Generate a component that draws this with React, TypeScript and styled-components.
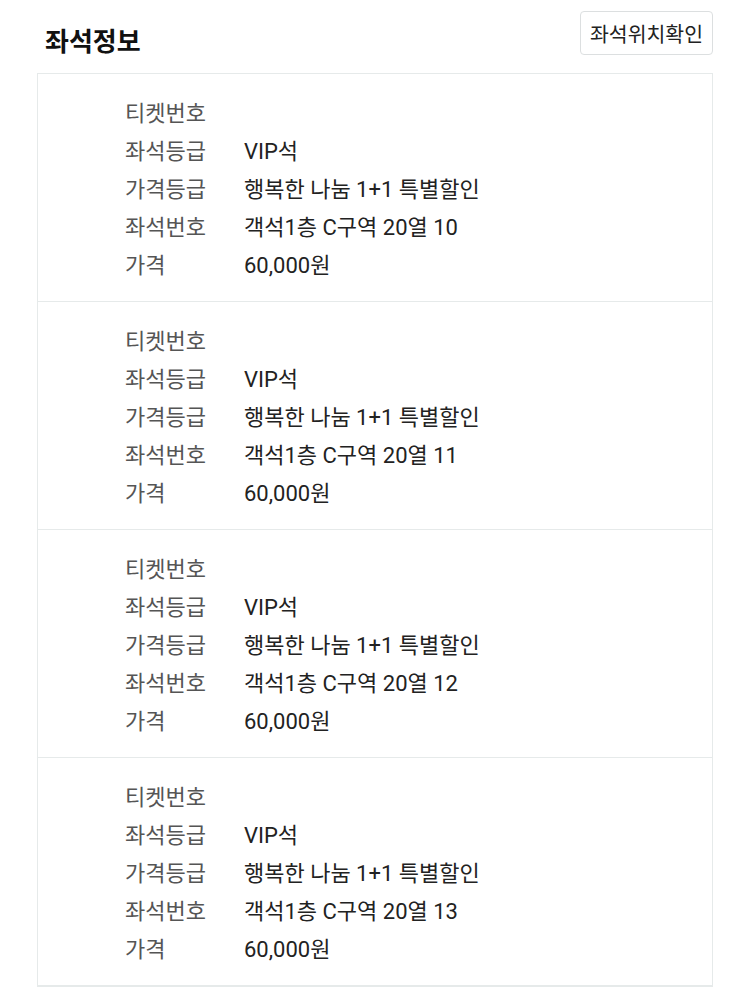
import React from "react";
import styled, { createGlobalStyle } from "styled-components";

const GlobalStyle = createGlobalStyle`
  html, body { margin: 0; padding: 0; background: #ffffff; }
  body { font-family: Roboto, "Noto Sans CJK KR", "Noto Sans", sans-serif; }
`;

const Page = styled.div`
  padding: 0 37px 0 37px;
  width: 750px;
  box-sizing: border-box;
`;

const Header = styled.div`
  display: flex;
  justify-content: space-between;
  align-items: flex-start;
  height: 73px;
`;

const Title = styled.h2`
  margin: 25px 0 0 8px;
  font-size: 26px;
  line-height: 30px;
  font-weight: 700;
  color: #111;
  font-family: "Noto Sans CJK KR", sans-serif;
`;

const OutlineButton = styled.button`
  margin-top: 11px;
  width: 133px;
  height: 44px;
  background: #fff;
  border: 1px solid #dcdfe0;
  border-radius: 4px;
  font-family: Roboto, "Noto Sans CJK KR", sans-serif;
  font-size: 20.5px;
  color: #222;
  padding: 0;
  display: flex;
  align-items: center;
  justify-content: center;
`;

const Card = styled.div`
  border: 1px solid #e6eaea;
  border-bottom-width: 2px;
`;

const Section = styled.div`
  padding: 18px 0 19px 87px;
  & + & {
    border-top: 1px solid #e6eaea;
  }
`;

const Row = styled.div`
  display: grid;
  grid-template-columns: 119px 1fr;
  height: 38px;
  align-items: center;
  font-size: 22px;
  white-space: nowrap;
`;

const Label = styled.span`
  color: #555;
`;

const Value = styled.span`
  color: #222;
`;

const tickets = ["10", "11", "12", "13"];

export default function App() {
  return (
    <>
      <GlobalStyle />
      <Page>
        <Header>
          <Title>좌석정보</Title>
          <OutlineButton>좌석위치확인</OutlineButton>
        </Header>
        <Card>
          {tickets.map((seat) => (
            <Section key={seat}>
              <Row>
                <Label>티켓번호</Label>
                <Value></Value>
              </Row>
              <Row>
                <Label>좌석등급</Label>
                <Value>VIP석</Value>
              </Row>
              <Row>
                <Label>가격등급</Label>
                <Value>행복한 나눔 1+1 특별할인</Value>
              </Row>
              <Row>
                <Label>좌석번호</Label>
                <Value>객석1층 C구역 20열 {seat}</Value>
              </Row>
              <Row>
                <Label>가격</Label>
                <Value>60,000원</Value>
              </Row>
            </Section>
          ))}
        </Card>
      </Page>
    </>
  );
}
